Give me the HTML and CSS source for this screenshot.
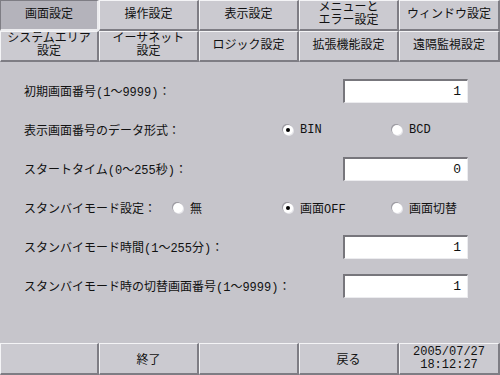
FILE: index.html
```html
<!DOCTYPE html>
<html lang="ja">
<head>
    <meta charset="UTF-8">
    <meta name="viewport" content="width=device-width, initial-scale=1.0">
    <title>画面設定</title>
    <link rel="stylesheet" href="styles.css">
</head>
<body>
    <div class="screen">
        <div class="tabs">
            <div class="tab selected">画面設定</div>
            <div class="tab">操作設定</div>
            <div class="tab">表示設定</div>
            <div class="tab">メニューと<br>エラー設定</div>
            <div class="tab">ウィンドウ設定</div>
            <div class="tab">システムエリア<br>設定</div>
            <div class="tab">イーサネット<br>設定</div>
            <div class="tab">ロジック設定</div>
            <div class="tab">拡張機能設定</div>
            <div class="tab">遠隔監視設定</div>
        </div>

        <div class="content">
            <div class="row">
                <span class="label">初期画面番号(1～9999)：</span>
                <div class="field">1</div>
            </div>
            <div class="row radios">
                <span class="label wide">表示画面番号のデータ形式：</span>
                <span class="radio"><i class="dot on"></i>BIN</span>
                <span class="radio"><i class="dot"></i>BCD</span>
            </div>
            <div class="row">
                <span class="label">スタートタイム(0～255秒)：</span>
                <div class="field">0</div>
            </div>
            <div class="row radios">
                <span class="label">スタンバイモード設定：</span>
                <span class="radio"><i class="dot"></i>無</span>
                <span class="radio"><i class="dot on"></i>画面OFF</span>
                <span class="radio"><i class="dot"></i>画面切替</span>
            </div>
            <div class="row">
                <span class="label">スタンバイモード時間(1～255分)：</span>
                <div class="field">1</div>
            </div>
            <div class="row">
                <span class="label">スタンバイモード時の切替画面番号(1～9999)：</span>
                <div class="field">1</div>
            </div>
        </div>

        <div class="footer">
            <div class="btn"></div>
            <div class="btn">終了</div>
            <div class="btn"></div>
            <div class="btn">戻る</div>
            <div class="btn clock">2005/07/27<br>18:12:27</div>
        </div>
    </div>
</body>
</html>
```

FILE: styles.css
```css
body {
    margin: 0;
    background-color: #c6c5cb;
    color: #111;
    font-family: "Liberation Mono", "Noto Sans CJK JP", monospace;
    font-size: 12px;
}

.screen {
    width: 500px;
    height: 375px;
    display: flex;
    flex-direction: column;
}

/* tab rows at the top */
.tabs {
    display: grid;
    grid-template-columns: 99px 100px 100px 100px 101px;
    grid-auto-rows: 31px;
}

.tab {
    display: flex;
    align-items: center;
    justify-content: center;
    text-align: center;
    line-height: 13px;
    background-color: #cbcad0;
    border-top: 1px solid #f4f4f6;
    border-left: 1px solid #f4f4f6;
    border-right: 2px solid #7e7d84;
    border-bottom: 2px solid #7e7d84;
    box-sizing: border-box;
}

.tab.selected {
    background-color: #b4b3bb;
    border-top-color: #7e7d84;
    border-left-color: #7e7d84;
    border-right-color: #ececef;
    border-bottom-color: #ececef;
}

/* settings rows */
.content {
    flex: 1;
    padding: 9px 32px 0 24px;
}

.row {
    height: 39px;
    display: flex;
    align-items: center;
    justify-content: space-between;
}

.row.radios {
    display: grid;
    grid-template-columns: 149px 110px 109px 1fr;
    align-items: center;
}

.label.wide {
    grid-column: 1 / 3;
}

.field {
    width: 125px;
    height: 24px;
    box-sizing: border-box;
    background-color: #fff;
    border-top: 2px solid #77767c;
    border-left: 2px solid #77767c;
    border-right: 1px solid #ececef;
    border-bottom: 1px solid #ececef;
    text-align: right;
    padding-right: 6px;
    line-height: 21px;
    font-size: 13px;
}

.radio {
    display: flex;
    align-items: center;
    gap: 7px;
}

.dot {
    width: 10px;
    height: 10px;
    border-radius: 50%;
    background-color: #fff;
    box-shadow: -1px -1px 0 #9c9ba2, 1px 1px 0 #e6e6ea;
    position: relative;
}

.dot.on::after {
    content: "";
    position: absolute;
    left: 3px;
    top: 3px;
    width: 4px;
    height: 4px;
    border-radius: 50%;
    background-color: #000;
}

/* bottom button bar */
.footer {
    display: grid;
    grid-template-columns: 99px 100px 100px 100px 101px;
    height: 32px;
}

.btn {
    display: flex;
    align-items: center;
    justify-content: center;
    text-align: center;
    background-color: #cbcad0;
    border-top: 1px solid #f4f4f6;
    border-left: 1px solid #f4f4f6;
    border-right: 2px solid #7e7d84;
    border-bottom: 2px solid #7e7d84;
    box-sizing: border-box;
}

.clock {
    line-height: 13px;
    font-size: 12px;
}
```
